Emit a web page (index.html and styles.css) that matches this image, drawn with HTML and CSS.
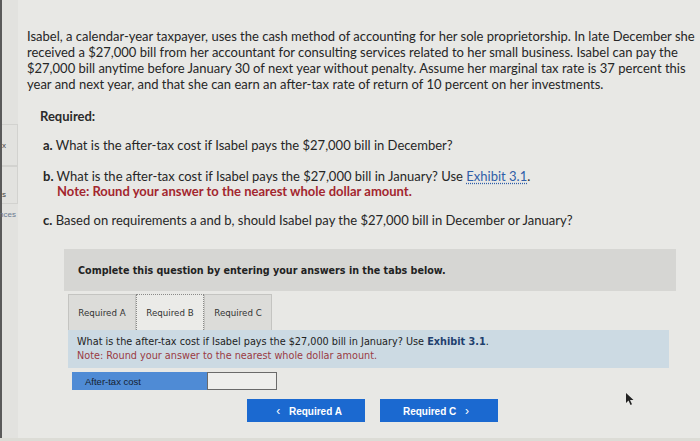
FILE: index.html
```html
<!DOCTYPE html>
<html>
<head>
<meta charset="utf-8">
<link rel="stylesheet" href="styles.css">
</head>
<body>
<div class="frame">
  <aside class="sidebar">
    <div class="side-box side-box-1">x</div>
    <div class="side-box side-box-2">s</div>
    <div class="side-label">nces</div>
  </aside>
  <main class="main">
    <p class="intro">Isabel, a calendar-year taxpayer, uses the cash method of accounting for her sole proprietorship. In late December she received a $27,000 bill from her accountant for consulting services related to her small business. Isabel can pay the $27,000 bill anytime before January 30 of next year without penalty. Assume her marginal tax rate is 37 percent this year and next year, and that she can earn an after-tax rate of return of 10 percent on her investments.</p>
    <h3 class="required">Required:</h3>
    <ul class="reqs">
      <li class="req req-a"><b>a.</b> What is the after-tax cost if Isabel pays the $27,000 bill in December?</li>
      <li class="req req-b"><b>b.</b> What is the after-tax cost if Isabel pays the $27,000 bill in January? Use <a class="exhibit">Exhibit 3.1</a>.<br><span class="note">Note: Round your answer to the nearest whole dollar amount.</span></li>
      <li class="req req-c"><b>c.</b> Based on requirements a and b, should Isabel pay the $27,000 bill in December or January?</li>
    </ul>

    <div class="instructions">Complete this question by entering your answers in the tabs below.</div>

    <div class="tabs">
      <div class="tab">Required A</div>
      <div class="tab tab-active">Required B</div>
      <div class="tab">Required C</div>
    </div>
    <div class="question">
      <div>What is the after-tax cost if Isabel pays the $27,000 bill in January? Use <b class="ex">Exhibit 3.1</b>.</div>
      <div class="qnote">Note: Round your answer to the nearest whole dollar amount.</div>
    </div>
    <div class="answer-row">
      <div class="answer-label">After-tax cost</div>
      <div class="answer-input"></div>
    </div>
    <div class="nav">
      <button class="nav-btn nav-prev"><span class="chev">&lsaquo;</span> Required A</button>
      <button class="nav-btn nav-next">Required C <span class="chev">&rsaquo;</span></button>
      <svg class="cursor" width="10" height="14" viewBox="0 0 10 14"><path d="M1 1 L1 11 L3.5 8.5 L5.5 13 L7 12.3 L5 8 L8.5 8 Z" fill="#222"/></svg>
    </div>
  </main>
</div>
<div class="bottom-strip"></div>
</body>
</html>
```
FILE: styles.css
```css
html, body {
  margin: 0;
  padding: 0;
}
body {
  width: 700px;
  height: 441px;
  overflow: hidden;
  background: #e8e8e5;
  font-family: "Lato", "Open Sans", sans-serif;
  color: #2a2a2a;
  position: relative;
}
.frame {
  display: flex;
  height: 438px;
}
.sidebar {
  width: 16px;
  border-left: 2px solid #5a5a5a;
  background: #e2e2df;
  padding-top: 124px;
  box-sizing: content-box;
  font-family: "Liberation Sans", sans-serif;
  font-size: 8px;
  color: #555;
}
.side-box {
  border: 1px solid #d2d2cf;
  border-left: none;
  height: 40px;
  display: flex;
  align-items: center;
  font-size: 8px;
  color: #444;
}
.side-box-2 {
  height: 38px;
  align-items: flex-end;
  padding-bottom: 4px;
  box-sizing: border-box;
}
.side-label {
  margin-top: 6px;
  color: #6a7a90;
  font-size: 8px;
  margin-left: -3px;
}
.main {
  flex: 1;
  padding-left: 9px;
}
.intro {
  margin: 28px 0 0;
  width: 668px;
  font-size: 13px;
  line-height: 16px;
  color: #262626;
}
.required {
  margin: 16px 0 0 13px;
  font-size: 13px;
  line-height: 16px;
  font-weight: 700;
}
.reqs {
  list-style: none;
  margin: 14px 0 0 16px;
  padding: 0;
  font-size: 13px;
  line-height: 15px;
  color: #262626;
}
.req b { font-weight: 700; }
.req-b { margin-top: 16px; }
.req-c { margin-top: 14px; }
.exhibit {
  color: #2f5ea8;
  text-decoration: underline;
  text-decoration-style: dotted;
  text-underline-offset: 2px;
}
.note {
  display: inline-block;
  margin-left: 14px;
  color: #a3262e;
  font-weight: 700;
}
.instructions {
  margin: 21px 0 0 37px;
  width: 612px;
  height: 42px;
  padding-left: 14px;
  box-sizing: border-box;
  background: #d6d6d3;
  display: flex;
  align-items: center;
  font-family: "DejaVu Sans", sans-serif;
  font-weight: 700;
  font-size: 9.6px;
  color: #222;
}
.tabs {
  display: flex;
  margin: 3px 0 0 41px;
  height: 36px;
}
.tab {
  width: 68px;
  display: flex;
  align-items: center;
  justify-content: center;
  background: #dcdcd9;
  border: 1px solid #c4c4c1;
  border-bottom: none;
  font-family: "DejaVu Sans", sans-serif;
  font-size: 8.7px;
  color: #333;
  box-sizing: border-box;
}
.tab-active {
  background: #ebebe8;
  border: 1px dotted #8a8a88;
  border-bottom: none;
}
.question {
  margin: 0 0 0 41px;
  width: 601px;
  height: 38px;
  padding: 5px 0 0 9px;
  box-sizing: border-box;
  background: #ccdae3;
  font-family: "DejaVu Sans", sans-serif;
  font-size: 9.7px;
  line-height: 14px;
  color: #222;
}
.ex { color: #1f3f6e; }
.qnote { color: #9a3a44; }
.answer-row {
  display: flex;
  margin: 4px 0 0 45px;
  height: 18px;
}
.answer-label {
  width: 135px;
  background: #4f8bd5;
  font-family: "Liberation Sans", sans-serif;
  font-size: 9.5px;
  color: #16222f;
  padding-left: 13px;
  box-sizing: border-box;
  display: flex;
  align-items: center;
}
.answer-input {
  width: 70px;
  background: #eeeeec;
  border: 1px solid #6a6a6a;
  box-sizing: border-box;
}
.nav {
  display: flex;
  margin: 9px 0 0 220px;
  gap: 15px;
  position: relative;
}
.nav-btn {
  width: 118px;
  height: 23px;
  border: none;
  background: #1b69d0;
  color: #fff;
  font-family: "Liberation Sans", sans-serif;
  font-weight: 700;
  font-size: 10px;
  padding: 0;
}
.chev { font-weight: 400; margin: 0 6px; font-size: 12px; }
.cursor {
  position: absolute;
  left: 378px;
  top: -7px;
}
.bottom-strip {
  height: 3px;
  background: #dcdcd6;
}
```
